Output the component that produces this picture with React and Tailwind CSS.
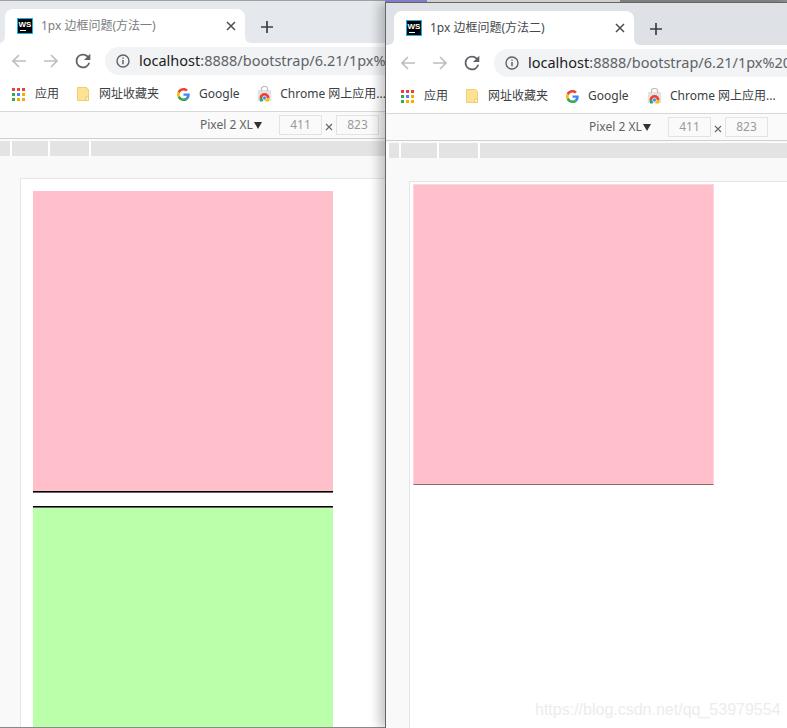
import React from "react";

const ui = { fontFamily: '"Noto Sans","Noto Sans CJK SC",sans-serif' };

function WsIcon() {
  return (
    <div className="w-4 h-4 shrink-0 bg-black border border-[#12b5e5] relative flex flex-col items-center overflow-hidden">
      <span className="text-white font-bold text-[8px] leading-[9px] mt-[1px]" style={{ fontFamily: '"Liberation Sans",sans-serif' }}>WS</span>
      <span className="absolute left-[2px] bottom-[2px] w-[6px] h-[1px] bg-white" />
    </div>
  );
}

function Apps() {
  const c = ["#ea4335", "#ea4335", "#ea4335", "#34a853", "#4285f4", "#f9ab00", "#34a853", "#f9ab00", "#f9ab00"];
  return (
    <div className="grid grid-cols-3 gap-[2px] w-[13px] h-[13px] shrink-0">
      {c.map((x, i) => <span key={i} className="w-[3px] h-[3px]" style={{ background: x }} />)}
    </div>
  );
}

function Folder() {
  return (
    <svg width="12" height="14" viewBox="0 0 12 14" className="shrink-0">
      <path d="M.5.5h9l2 2v11H.5z" fill="#fde293" stroke="#f0cf70" />
      <rect x="9" y="10" width="2.5" height="3.5" fill="#fff6d5" stroke="#e6c25a" strokeWidth=".7" />
    </svg>
  );
}

function GLogo() {
  return (
    <svg width="13" height="13" viewBox="0 0 48 48" className="shrink-0">
      <path fill="#EA4335" d="M24 9.5c3.5 0 6.700 1.200 9.200 3.600l6.900-6.900C35.900 2.400 30.500 0 24 0 14.600 0 6.500 5.400 2.600 13.200l8 6.200C12.400 13.700 17.700 9.500 24 9.500z" />
      <path fill="#4285F4" d="M46.900 24.500c0-1.600-.1-3.100-.4-4.500H24v9h12.900c-.6 3-2.200 5.500-4.800 7.200l7.700 6c4.500-4.200 7.100-10.300 7.100-17.700z" />
      <path fill="#FBBC05" d="M10.500 28.600c-.5-1.400-.8-3-.8-4.600s.3-3.200.8-4.600l-8-6.200C.9 16.500 0 20.100 0 24s.9 7.500 2.600 10.800l7.900-6.200z" />
      <path fill="#34A853" d="M24 48c6.500 0 11.900-2.100 15.900-5.800l-7.700-6c-2.100 1.400-4.900 2.300-8.200 2.300-6.300 0-11.600-4.200-13.500-9.900l-8 6.200C6.500 42.600 14.600 48 24 48z" />
    </svg>
  );
}

function Store() {
  return (
    <svg width="15" height="16" viewBox="0 0 15 16" className="shrink-0">
      <path d="M1 4h13l.5 11H.5z" fill="#e3e3e3" />
      <path d="M4.500 5V2.500a3 2 0 0 1 6 0V5" fill="none" stroke="#bdbdbd" strokeWidth="1.200" />
      <path d="M2.500 12a5 5 0 0 1 10 0z" fill="#ea4335" />
      <path d="M2.500 12h5l-2 3.500H3z" fill="#34a853" />
      <path d="M12.500 12h-5l1 3.500H12z" fill="#fbbc05" />
      <circle cx="7.500" cy="12" r="2" fill="#4285f4" stroke="#fff" strokeWidth=".7" />
    </svg>
  );
}

function NavIcon({ d, color, className = "" }) {
  return (
    <svg width="16" height="16" viewBox="0 0 16 16" fill="none" stroke={color} strokeWidth="1.700" className={"shrink-0 " + className}>
      <path d={d} />
    </svg>
  );
}

function Chrome({ title, ox, strip, url, tabInset }) {
  return (
    <>
      {/* tab strip */}
      <div className={"h-[42px] shrink-0 flex items-end " + ox} style={{ background: strip }}>
        <div className="relative ml-[5px] w-[240px] h-[34px] bg-white rounded-t-[8px] flex items-center pl-3 pr-[9px]">
          <span className="absolute -left-[6px] bottom-0 w-[6px] h-[6px] bg-white">
            <span className="block w-full h-full rounded-br-[6px]" style={{ background: strip }} />
          </span>
          <span className="absolute -right-[6px] bottom-0 w-[6px] h-[6px] bg-white">
            <span className="block w-full h-full rounded-bl-[6px]" style={{ background: strip }} />
          </span>
          <WsIcon />
          <span className={"ml-2 flex-1 text-[12px] whitespace-nowrap " + tabInset}>{title}</span>
          <svg width="10" height="10" viewBox="0 0 10 10" stroke="#4a4d51" strokeWidth="1.500" className="shrink-0"><path d="M1 1l8 8M9 1L1 9" /></svg>
        </div>
        <svg width="14" height="14" viewBox="0 0 14 14" stroke="#3c4043" strokeWidth="1.700" className="ml-[15px] mb-[9px] shrink-0"><path d="M7 1v12M1 7h12" /></svg>
      </div>
      {/* toolbar */}
      <div className={"h-[34px] shrink-0 bg-white flex items-center overflow-hidden " + ox}>
        <NavIcon className="ml-[11px] mt-[1px]" color="#bcbec1" d="M15 8H2M8 2L2 8l6 6" />
        <NavIcon className="ml-[16px] mt-[1px]" color="#bcbec1" d="M1 8h13M8 2l6 6-6 6" />
        <svg width="22" height="22" viewBox="0 0 24 24" fill="#5f6368" className="ml-[13px] mt-[1px] shrink-0">
          <path d="M17.650 6.350A7.960 7.960 0 0 0 12 4a8 8 0 1 0 7.730 10h-2.080A6 6 0 1 1 12 6c1.660 0 3.140.69 4.220 1.780L13 11h7V4z" />
        </svg>
        <div className="ml-[11px] h-[28px] mt-[1px] w-[700px] shrink-0 rounded-full bg-[#f1f3f4] flex items-center pl-[11px]">
          <svg width="14" height="14" viewBox="0 0 14 14" className="shrink-0">
            <circle cx="7" cy="7" r="6" fill="none" stroke="#5f6368" strokeWidth="1.400" />
            <path d="M7 6v4.200M7 3.400v1.400" stroke="#5f6368" strokeWidth="1.500" />
          </svg>
          <span className="ml-[9px] text-[14.500px] whitespace-nowrap text-[#5f6368]">
            <span className="text-[#202124]">localhost</span>{url}
          </span>
        </div>
      </div>
      {/* bookmarks */}
      <div className={"h-[34px] shrink-0 bg-white flex items-center text-[12px] text-[#3c4043] whitespace-nowrap overflow-hidden " + ox}>
        <span className="ml-3"><Apps /></span>
        <span className="ml-[10px] w-[24px]">应用</span>
        <span className="ml-[18px]"><Folder /></span>
        <span className="ml-[10px] w-[60px]">网址收藏夹</span>
        <span className="ml-[18px]"><GLogo /></span>
        <span className="ml-[9px] w-[42px]">Google</span>
        <span className="ml-[17px]"><Store /></span>
        <span className="ml-[8px]">Chrome 网上应用...</span>
      </div>
      <div className="h-[1px] shrink-0 bg-[#d8d8d8]" />
      {/* device toolbar */}
      <div className={"h-[26px] shrink-0 bg-[#fafafa] flex items-center text-[12px] text-[#5f6368] whitespace-nowrap " + ox}>
        <span className="ml-[200px] w-[50px]">Pixel 2 XL</span>
        <svg width="8" height="7" viewBox="0 0 8 7" className="ml-[4px] shrink-0"><path d="M0 0h8L4 7z" fill="#333" /></svg>
        <span className="ml-[17px] w-[43px] h-[20px] border border-[#e3e3e3] flex items-center justify-center text-[#9a9a9a]">411</span>
        <svg width="8" height="8" viewBox="0 0 8 8" stroke="#666" strokeWidth="1.100" className="mx-[3px] mt-[3px] shrink-0"><path d="M1 1l6 6M7 1L1 7" /></svg>
        <span className="w-[43px] h-[20px] border border-[#e3e3e3] flex items-center justify-center text-[#9a9a9a]">823</span>
      </div>
      <div className="h-[1px] shrink-0 bg-[#cfcfcf]" />
      <div className="h-[2px] shrink-0 bg-[#fafafa]" />
      {/* ruler */}
      <div className={"h-[15px] shrink-0 bg-white flex " + ox}>
        <span className="w-[10px] bg-[#e3e3e3]" />
        <span className="ml-[2px] w-[36px] bg-[#e3e3e3]" />
        <span className="ml-[2px] w-[39px] bg-[#e3e3e3]" />
        <span className="ml-[2px] flex-1 bg-[#e3e3e3]" />
      </div>
    </>
  );
}

export default function App() {
  return (
    <div className="relative w-[787px] h-[728px] overflow-hidden bg-white" style={ui}>
      {/* left window */}
      <div className="absolute left-0 top-0 w-[386px] h-[728px] flex flex-col overflow-hidden border-t border-b border-t-[#a0a0a0] border-b-[#8a8a8a] text-[#5f6368]">
        <Chrome title="1px 边框问题(方法一)" ox="" strip="#e5e8ec" url=":8888/bootstrap/6.21/1px%20" tabInset="text-[#7a7d80]" />
        <div className="flex-1 min-h-0 bg-[#f9f9f9] pl-[20px] pt-[22px]">
          <div className="h-full bg-white border-l border-t border-[#e6e6e6] pl-[12px] pt-[12px]">
            <div className="w-[300px] h-[300px] bg-[#ffc0cb]" />
            <div className="w-[300px] h-[2px] bg-black border-b border-b-[#666]" />
            <div className="w-[300px] h-[13px]" />
            <div className="w-[300px] h-[2px] bg-black border-b border-b-[#666]" />
            <div className="w-[300px] h-[230px] bg-[#bbffaa]" />
          </div>
        </div>
      </div>

      {/* desktop sliver above the right window */}
      <div className="absolute left-[385px] top-0 w-[402px] h-[2px] flex">
        <span className="w-[42px] bg-[#8f88dc]" />
        <span className="w-[193px] bg-[#e4e4e4]" />
        <span className="flex-1 bg-[#8c8c8c]" />
      </div>

      {/* right window */}
      <div className="absolute left-[385px] top-[2px] w-[402px] h-[726px] flex flex-col overflow-hidden bg-white border-l border-t border-[#666] text-[#5f6368] shadow-[-6px_0_10px_rgba(0,0,0,0.22)]">
        <Chrome title="1px 边框问题(方法二)" ox="pl-[3px]" strip="#dee1e6" url=":8888/bootstrap/6.21/1px%20" tabInset="text-[#45484c]" />
        <div className="flex-1 min-h-0 bg-[#f9f9f9] pl-[23px] pt-[23px]">
          <div className="h-full bg-white border-l border-t border-[#e6e6e6] pl-[3px] pt-[2px]">
            <div className="w-[301px] h-[301px] bg-[#ffc0cb] border border-[#ffd5dd] border-b-[#8a6a70]" />
          </div>
        </div>
      </div>

      {/* watermark */}
      <span className="absolute left-[535px] top-[699px] text-[16px] leading-[22px] text-[#ececec] whitespace-nowrap" style={{ fontFamily: '"Liberation Sans",sans-serif' }}>
        https://blog.csdn.net/qq_53979554
      </span>
    </div>
  );
}
